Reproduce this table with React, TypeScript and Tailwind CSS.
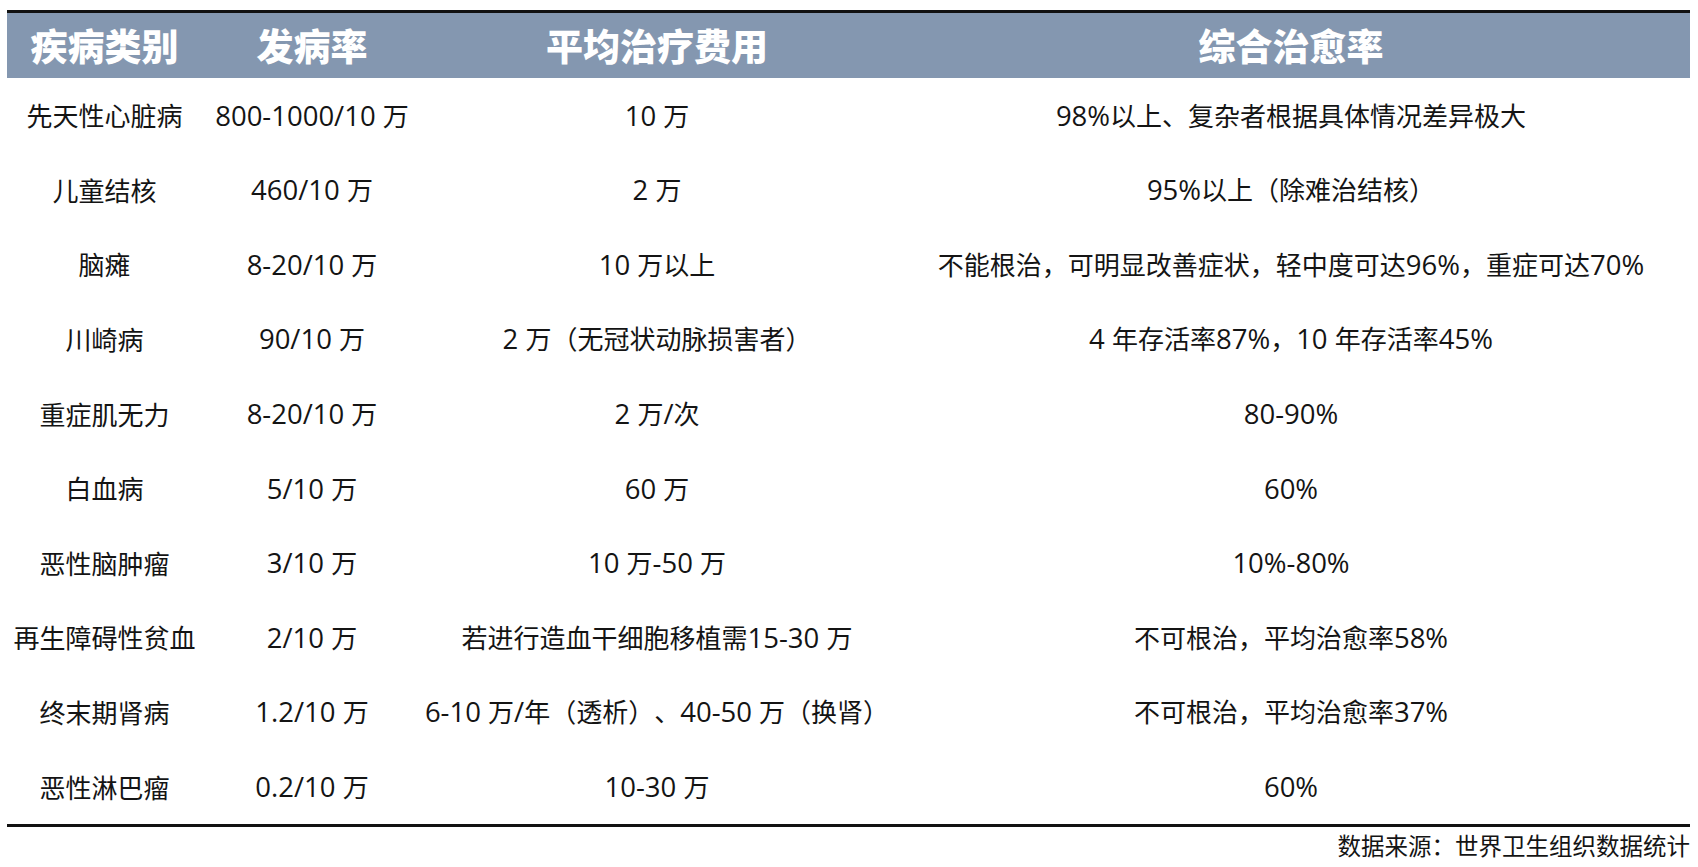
import React from 'react';

const FONT = { fontFamily: '"Noto Sans CJK SC", "Noto Sans", sans-serif' };
const LATIN_FONT = { fontFamily: '"Open Sans", "Noto Sans CJK SC", sans-serif' };

const ROWS: [string, string, string, string][] = [
  ['先天性心脏病', '800-1000/10 万', '10 万', '98%以上、复杂者根据具体情况差异极大'],
  ['儿童结核', '460/10 万', '2 万', '95%以上（除难治结核）'],
  ['脑瘫', '8-20/10 万', '10 万以上', '不能根治，可明显改善症状，轻中度可达96%，重症可达70%'],
  ['川崎病', '90/10 万', '2 万（无冠状动脉损害者）', '4 年存活率87%，10 年存活率45%'],
  ['重症肌无力', '8-20/10 万', '2 万/次', '80-90%'],
  ['白血病', '5/10 万', '60 万', '60%'],
  ['恶性脑肿瘤', '3/10 万', '10 万-50 万', '10%-80%'],
  ['再生障碍性贫血', '2/10 万', '若进行造血干细胞移植需15-30 万', '不可根治，平均治愈率58%'],
  ['终末期肾病', '1.2/10 万', '6-10 万/年（透析）、40-50 万（换肾）', '不可根治，平均治愈率37%'],
  ['恶性淋巴瘤', '0.2/10 万', '10-30 万', '60%'],
];

const HEADERS = ['疾病类别', '发病率', '平均治疗费用', '综合治愈率'];

const COLS = 'grid grid-cols-[195px_220px_470px_798px]';

// numbers in the source run a little larger than the Chinese text
function Cell({ text }: { text: string }) {
  const parts = text.split(/([\u3000-\u9fff\uff00-\uffef]+)/).filter(Boolean);
  return (
    <div className="text-center text-[#141414] leading-none whitespace-nowrap [text-spacing-trim:space-all]">
      {parts.map((p, i) =>
        /[\u3000-\u9fff\uff00-\uffef]/.test(p) ? (
          <span key={i} className="text-[26px]">{p}</span>
        ) : (
          <span key={i} className="text-[27.5px]" style={LATIN_FONT}>{p}</span>
        )
      )}
    </div>
  );
}

export default function App() {
  return (
    <div className="w-[1698px] h-[867px] bg-white pt-[10px]" style={FONT}>
      <div className="ml-[7px] w-[1683px]">
        {/* Header */}
        <div className="border-t-[3px] border-[#111111]">
          <div className={`${COLS} h-[65px] bg-[#8497b0] items-center`}>
            {HEADERS.map((h) => (
              <div key={h} className="text-center text-white text-[37px] font-black leading-none">
                {h}
              </div>
            ))}
          </div>
        </div>

        {/* Body rows */}
        <div className="border-b-[3px] border-[#111111]">
          {ROWS.map((row, i) => (
            <div key={i} className={`${COLS} h-[74.6px] items-center`}>
              {row.map((cell, j) => (
                <Cell key={j} text={cell} />
              ))}
            </div>
          ))}
        </div>

        {/* Source note */}
        <div className="flex justify-end pt-[7px]">
          <span className="text-[23.5px] leading-none text-[#141414]">数据来源：世界卫生组织数据统计</span>
        </div>
      </div>
    </div>
  );
}
